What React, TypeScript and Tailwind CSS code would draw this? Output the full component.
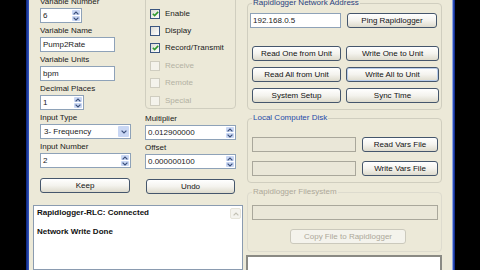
import React from "react";

function Chev({ dir, color }: { dir: "up" | "down"; color: string }) {
  return (
    <svg width="6" height="4" viewBox="0 0 6 4">
      <path
        d={dir === "up" ? "M0.6 3.4 L3 1 L5.4 3.4" : "M0.6 0.6 L3 3 L5.4 0.6"}
        fill="none"
        stroke={color}
        strokeWidth="1.2"
      />
    </svg>
  );
}

function Label({ text }: { text: string }) {
  return (
    <div className="h-[14px] flex items-end pb-[1px] text-[8px] leading-[10px] text-[#1a1a1a] whitespace-nowrap">
      {text}
    </div>
  );
}

function Spin({ value, w }: { value: string; w: string }) {
  return (
    <div className={`h-[15px] ${w} border border-[#8ea2b8] bg-white flex`}>
      <div className="flex-1 flex items-center pl-[2px] text-[8px] leading-none text-[#222]">{value}</div>
      <div className="w-[10px] flex flex-col gap-[1px] p-[1px]">
        <div className="flex-1 bg-[#c9d7f4] rounded-[1px] flex items-center justify-center">
          <Chev dir="up" color="#3b4f7a" />
        </div>
        <div className="flex-1 bg-[#c9d7f4] rounded-[1px] flex items-center justify-center">
          <Chev dir="down" color="#3b4f7a" />
        </div>
      </div>
    </div>
  );
}

function TextBox({ value, w }: { value: string; w: string }) {
  return (
    <div className={`h-[15px] ${w} border border-[#8ea2b8] bg-white flex items-center pl-[2px] text-[8px] leading-none text-[#222]`}>
      {value}
    </div>
  );
}

function Btn({ text, w, hot }: { text: string; w: string; hot?: boolean }) {
  return (
    <div
      className={`h-[15px] ${w} rounded-[3px] border border-[#45566c] bg-linear-to-b from-white via-[#f4f3ee] to-[#dedbcd] flex items-center justify-center text-[8px] leading-none text-[#111] whitespace-nowrap ${
        hot ? "shadow-[inset_0_0_0_1px_#b9cdea]" : ""
      }`}
    >
      {text}
    </div>
  );
}

function Check({ label, state }: { label: string; state: "on" | "off" | "dis" }) {
  return (
    <div className="h-[17.4px] flex items-center gap-[5px] pl-[4px]">
      <div
        className={`w-[10px] h-[10px] border flex items-center justify-center ${
          state === "dis"
            ? "border-[#cfcdc0] bg-[#f4f3ec]"
            : "border-[#3a5680] bg-linear-to-br from-[#dcdcd6] to-white"
        }`}
      >
        {state === "on" && (
          <svg width="7" height="6" viewBox="0 0 7 6">
            <path d="M0.8 2.8 L2.6 4.6 L6.2 0.9" fill="none" stroke="#2f9a2f" strokeWidth="1.6" />
          </svg>
        )}
      </div>
      <span className={`text-[8px] leading-none whitespace-nowrap ${state === "dis" ? "text-[#b3b1a3]" : "text-[#1a1a1a]"}`}>
        {label}
      </span>
    </div>
  );
}

function DisInput({ w }: { w: string }) {
  return <div className={`h-[15px] ${w} border border-[#a9a79b] bg-[#eae7d8]`} />;
}

export default function App() {
  return (
    <div className="w-[480px] h-[270px] bg-black flex overflow-hidden font-['Liberation_Sans',Arial,sans-serif]">
      <div className="w-[26px] shrink-0 bg-black" />
      <div className="w-[3px] shrink-0 bg-linear-to-r from-[#0b2378] to-[#3658c4]" />
      <div className="w-[423px] shrink-0 bg-[#ece9d8] flex pl-[4px]">
        {/* left section */}
        <div className="w-[210px] shrink-0 flex flex-col">
          <div className="flex pl-[7px] gap-[14px] -mt-[6px]">
            {/* column 1 */}
            <div className="w-[91px] shrink-0 flex flex-col">
              <Label text="Variable Number" />
              <Spin value="6" w="w-[42px]" />
              <Label text="Variable Name" />
              <TextBox value="Pump2Rate" w="w-[75px]" />
              <Label text="Variable Units" />
              <TextBox value="bpm" w="w-[75px]" />
              <Label text="Decimal Places" />
              <Spin value="1" w="w-[44px]" />
              <Label text="Input Type" />
              <div className="h-[15px] w-[91px] border border-[#8ea2b8] bg-white flex">
                <div className="flex-1 flex items-center pl-[3px] text-[8px] leading-none text-[#222]">3- Frequency</div>
                <div className="w-[11px] m-[1px] bg-[#c9d7f4] rounded-[1px] flex items-center justify-center">
                  <Chev dir="down" color="#3b4f7a" />
                </div>
              </div>
              <Label text="Input Number" />
              <Spin value="2" w="w-[91px]" />
              <div className="mt-[10px]">
                <Btn text="Keep" w="w-[90px]" />
              </div>
            </div>
            {/* column 2 */}
            <div className="w-[91px] shrink-0 flex flex-col">
              <div className="h-[115px] border border-[#d0cebf] rounded-b-[4px] pt-[10px]">
                <Check label="Enable" state="on" />
                <Check label="Display" state="off" />
                <Check label="Record/Transmit" state="on" />
                <Check label="Receive" state="dis" />
                <Check label="Remote" state="dis" />
                <Check label="Special" state="dis" />
              </div>
              <div className="h-[16px] flex items-end pb-[1px] text-[8px] leading-[10px] text-[#1a1a1a]">Multiplier</div>
              <Spin value="0.012900000" w="w-[91px]" />
              <Label text="Offset" />
              <Spin value="0.000000100" w="w-[91px]" />
              <div className="mt-[10px] pl-[1px]">
                <Btn text="Undo" w="w-[89px]" />
              </div>
            </div>
          </div>
          {/* log box */}
          <div className="mt-[11px] flex-1 border border-[#8a9bb0] bg-white flex">
            <div className="flex-1 pl-[3px] pt-[2px] text-[8px] font-bold leading-[10px] text-[#111]">
              <div>Rapidlogger-RLC: Connected</div>
              <div className="mt-[9px]">Network Write Done</div>
            </div>
            <div className="w-[12px] pt-[2px] pr-[1px]">
              <div className="h-[11px] rounded-[2px] bg-[#f4f3ee] border border-[#e6e4da] flex items-center justify-center">
                <Chev dir="up" color="#c2c0b4" />
              </div>
            </div>
          </div>
        </div>

        {/* right section */}
        <div className="ml-[3px] w-[197px] shrink-0 flex flex-col pl-[1px]">
          {/* Network address group */}
          <div className="relative mt-[3px] h-[107px] w-[195px] border border-[#d0cebf] rounded-[4px] pt-[9px]">
            <span className="absolute -top-[6px] left-[4px] px-[1px] bg-[#ece9d8] text-[8px] leading-[10px] text-[#2a3f7e] whitespace-nowrap">
              Rapidlogger Network Address
            </span>
            <div className="flex gap-[6px] pl-[2px]">
              <TextBox value="192.168.0.5" w="w-[91px]" />
              <Btn text="Ping Rapidlogger" w="w-[90px]" />
            </div>
            <div className="mt-[18px] pl-[4px] grid grid-cols-[89px_93px] gap-x-[5px] gap-y-[6px]">
              <Btn text="Read One from Unit" w="w-full" />
              <Btn text="Write One to Unit" w="w-full" />
              <Btn text="Read All from Unit" w="w-full" />
              <Btn text="Write All to Unit" w="w-full" hot />
              <Btn text="System Setup" w="w-full" />
              <Btn text="Sync Time" w="w-full" />
            </div>
          </div>

          {/* Local computer disk */}
          <div className="relative mt-[8px] h-[65px] w-[195px] border border-[#d0cebf] rounded-[4px] pt-[18px] pl-[4px]">
            <span className="absolute -top-[6px] left-[4px] px-[1px] bg-[#ece9d8] text-[8px] leading-[10px] text-[#1f4aa8] whitespace-nowrap">
              Local Computer Disk
            </span>
            <div className="flex gap-[6px]">
              <DisInput w="w-[104px]" />
              <Btn text="Read Vars File" w="w-[76px]" />
            </div>
            <div className="flex gap-[6px] mt-[9px]">
              <DisInput w="w-[104px]" />
              <Btn text="Write Vars File" w="w-[76px]" />
            </div>
          </div>

          {/* Rapidlogger filesystem */}
          <div className="relative mt-[9px] h-[60px] w-[195px] border border-[#dddbce] rounded-[4px] pt-[12px] pl-[4px]">
            <span className="absolute -top-[6px] left-[4px] px-[1px] bg-[#ece9d8] text-[8px] leading-[10px] text-[#aca899] whitespace-nowrap">
              Rapidlogger Filesystem
            </span>
            <DisInput w="w-[186px]" />
            <div className="mt-[9px] pl-[38px]">
              <div className="h-[15px] w-[116px] rounded-[3px] border border-[#cbc9bc] bg-[#f4f3ec] flex items-center justify-center text-[8px] leading-none text-[#aca899] whitespace-nowrap">
                Copy File to Rapidlogger
              </div>
            </div>
          </div>

          {/* bottom box */}
          <div className="mt-[3px] flex-1 w-[196px] -ml-[1px] border-2 border-[#8a8a84] border-b-0 bg-white" />
        </div>
      </div>
      <div className="w-[3px] shrink-0 bg-linear-to-r from-[#c8d4ee] via-[#2a4bb8] to-[#0b2378]" />
      <div className="flex-1 bg-black" />
    </div>
  );
}
